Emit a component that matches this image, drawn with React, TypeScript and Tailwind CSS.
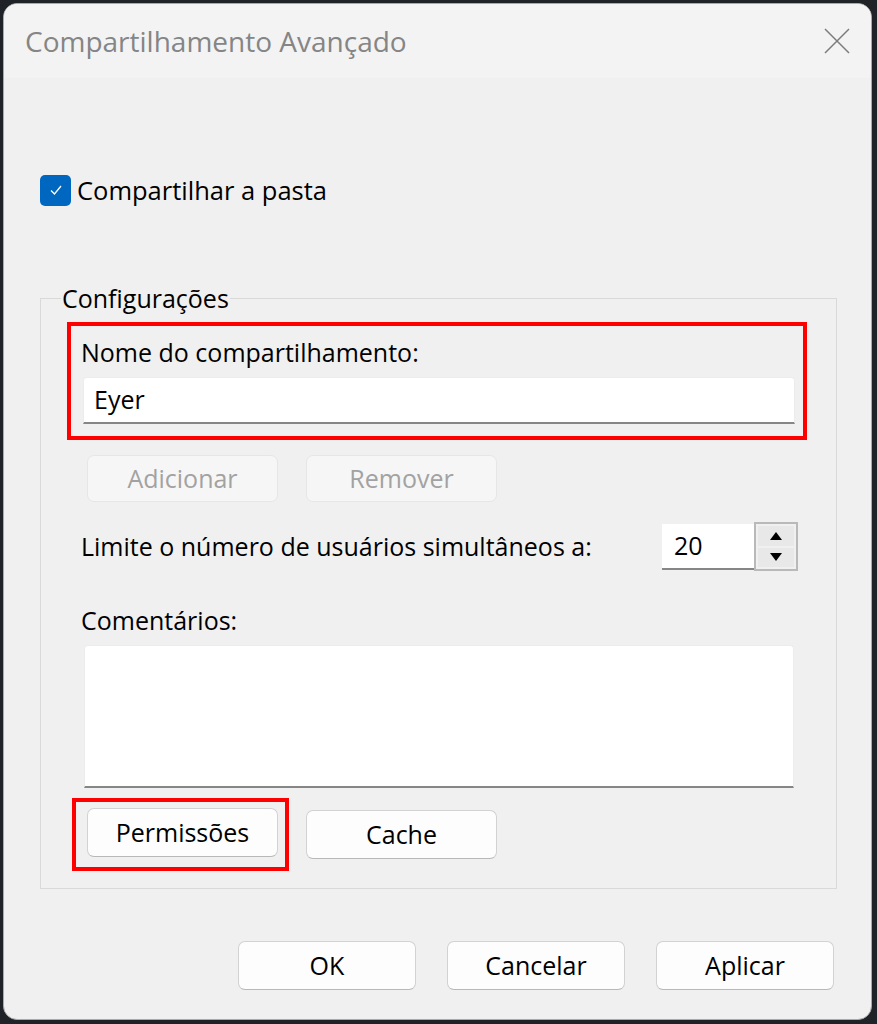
import React from 'react';

const font = { fontFamily: '"Open Sans", "Noto Sans", sans-serif' };

const DialogButton = ({ label, disabled = false, w = 'w-[191px]' }: { label: string; disabled?: boolean; w?: string }) => (
  <button
    type="button"
    className={
      disabled
        ? `${w} h-[47px] rounded-[7px] border border-[#e6e6e6] bg-[#f6f6f6] text-[#a2a2a2] text-[25px]`
        : `${w} h-[49px] rounded-[7px] border border-[#d2d2d2] border-b-[#b8b8b8] bg-[#fdfdfd] text-black text-[25px]`
    }
  >
    {label}
  </button>
);

const App = () => {
  return (
    <div className="w-[877px] h-[1024px] bg-[#1f2226] pt-[3px] pl-[3px]" style={font}>
      <div className="w-[869px] h-[1017px] rounded-[14px] border border-[#a9a9a9] overflow-hidden flex flex-col bg-[#f0f0f0]">
        {/* title bar */}
        <div className="h-[74px] bg-[#f3f3f3] flex items-center justify-between pl-[21px] pr-[21px]">
          <span className="text-[28px] text-[#858585] leading-none">Compartilhamento Avançado</span>
          <svg width="26" height="26" viewBox="0 0 26 26" className="text-[#7c7c7c]">
            <path d="M1 1 L25 25 M25 1 L1 25" stroke="currentColor" strokeWidth="1.5" fill="none" />
          </svg>
        </div>

        {/* body */}
        <div className="flex-1 flex flex-col">
          <div className="mt-[96px] ml-[36px] flex items-center h-[32px]">
            <div className="w-[31px] h-[31px] rounded-[5px] bg-[#0067c0] flex items-center justify-center">
              <svg width="14" height="12" viewBox="0 0 14 12">
                <path d="M2 6.5 L5.5 10 L12 2" stroke="white" strokeWidth="1.3" fill="none" />
              </svg>
            </div>
            <span className="ml-[6px] text-[25.5px] text-black">Compartilhar a pasta</span>
          </div>

          <fieldset className="mt-[75px] ml-[36px] w-[797px] h-[608px] border border-[#d9d9d9] px-0 pb-[16px] flex flex-col">
            <legend className="ml-[20px] px-[1px] text-[25px] leading-[34px] text-black">Configurações</legend>

            <div className="mt-[7px] ml-[26px] w-[740px] h-[118px] border-[4px] border-[#ff0000] flex flex-col">
              <span className="mt-[9px] pl-[10px] text-[25px] leading-[34px] text-black">Nome do compartilhamento:</span>
              <div className="mt-[8px] ml-[12px] w-[712px] h-[47px] bg-white rounded-t-[4px] border border-[#ececec] border-b-2 border-b-[#868686] flex items-center pl-[10px] text-[25px] text-black">
                Eyer
              </div>
            </div>

            <div className="mt-[15px] ml-[46px] flex gap-[28px]">
              <DialogButton label="Adicionar" disabled />
              <DialogButton label="Remover" disabled />
            </div>

            <div className="mt-[20px] pl-[40px] pr-[38px] flex items-center justify-between">
              <span className="text-[25px] text-black">Limite o número de usuários simultâneos a:</span>
              <div className="flex items-center">
                <div className="w-[92px] h-[46px] bg-white border-b-2 border-b-[#868686] flex items-center pl-[12px] text-[25px] text-black">
                  20
                </div>
                <div className="w-[44px] h-[49px] border-2 border-[#b9b9b9] bg-[#f0f0f0] flex flex-col p-[2px] gap-[2px]">
                  <div className="flex-1 bg-[#e8e8e8] flex items-center justify-center">
                    <svg width="12" height="8" viewBox="0 0 12 8"><path d="M6 0 L12 8 L0 8 Z" fill="black" /></svg>
                  </div>
                  <div className="flex-1 bg-[#e8e8e8] flex items-center justify-center">
                    <svg width="12" height="8" viewBox="0 0 12 8"><path d="M0 0 L12 0 L6 8 Z" fill="black" /></svg>
                  </div>
                </div>
              </div>
            </div>

            <span className="mt-[32px] pl-[40px] text-[25px] leading-[34px] text-black">Comentários:</span>
            <div className="mt-[8px] ml-[43px] w-[710px] h-[143px] bg-white rounded-t-[4px] border border-[#ececec] border-b-2 border-b-[#868686]" />

            <div className="mt-[10px] ml-[31px] flex items-center">
              <div className="w-[217px] h-[73px] border-[4px] border-[#ff0000] pl-[11px] pt-[6px]">
                <DialogButton label="Permissões" />
              </div>
              <div className="ml-[17px]">
                <DialogButton label="Cache" />
              </div>
            </div>
          </fieldset>

          <div className="mt-[52px] pr-[37px] flex justify-end gap-[31px]">
            <DialogButton label="OK" w="w-[178px]" />
            <DialogButton label="Cancelar" w="w-[178px]" />
            <DialogButton label="Aplicar" w="w-[178px]" />
          </div>
        </div>
      </div>
    </div>
  );
};

export default App;
